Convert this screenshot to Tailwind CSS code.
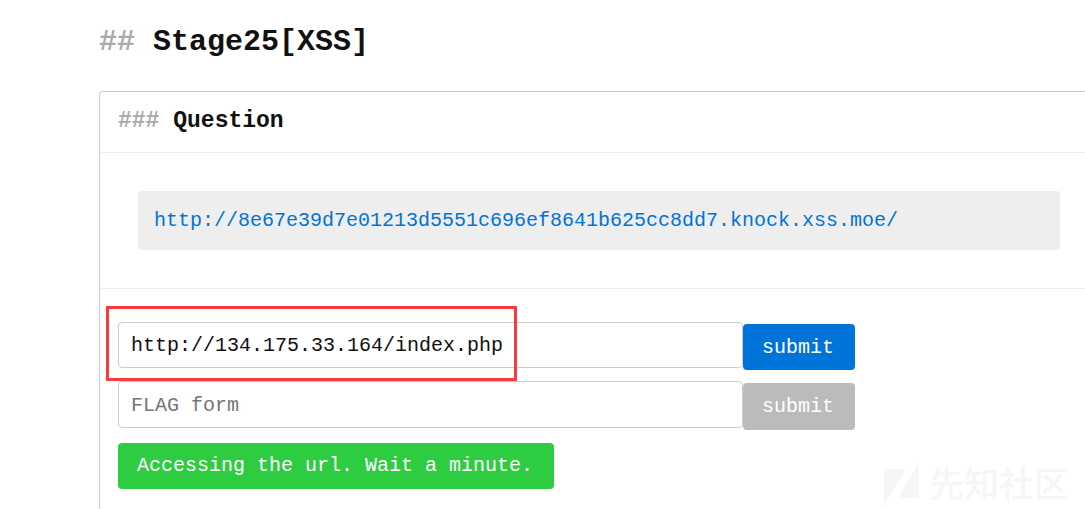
<!DOCTYPE html>
<html lang="en">
<head>
<meta charset="utf-8">
<title>Stage25[XSS]</title>
<script src="https://cdn.jsdelivr.net/npm/@tailwindcss/browser@4"></script>
</head>
<body class="bg-white font-['Liberation_Mono',monospace] text-[20px] leading-[30px] text-[#111]">
<main class="relative flex min-h-screen flex-col overflow-hidden pl-[99px]">
  <h1 class="pt-[22px] pb-[29px] text-[30px] leading-[40px] font-bold whitespace-pre"><span class="text-[#aaa]">## </span>Stage25[XSS]</h1>
  <section class="flex-1 rounded-tl border-t border-l border-[#ccc]">
    <header class="border-b border-[#eee] px-[18px] pt-[14px] pb-4">
      <h2 class="text-[23px] leading-[30px] font-bold whitespace-pre"><span class="text-[#aaa]">### </span>Question</h2>
    </header>
    <div class="border-b border-[#eee] py-[38px] pr-[25px] pl-[38px]">
      <p class="rounded bg-[#eee] px-4 pt-[15px] pb-[14px]"><a href="http://8e67e39d7e01213d5551c696ef8641b625cc8dd7.knock.xss.moe/" class="text-[#0074d9]">http://8e67e39d7e01213d5551c696ef8641b625cc8dd7.knock.xss.moe/</a></p>
    </div>
    <div class="flex flex-col items-start px-[18px] pt-[33px] pb-5">
      <form class="relative flex w-full max-w-[737px] items-start pb-[11px]">
        <input type="text" aria-label="URL" value="http://134.175.33.164/index.php" class="h-[46px] min-w-0 flex-1 rounded border border-[#ccc] bg-white px-3 outline-none">
        <button type="button" class="mt-[2px] h-[46px] w-28 rounded bg-[#0074d9] pt-[2px] pr-[2px] text-white">submit</button>
        <div class="pointer-events-none absolute -top-4 -left-3 h-[75px] w-[411px] border-3 border-[#fc393b]"></div>
      </form>
      <form class="flex w-full max-w-[737px] items-start pb-[13px]">
        <input type="text" aria-label="FLAG form" placeholder="FLAG form" class="h-[47px] min-w-0 flex-1 rounded border border-[#ccc] bg-white px-3 pt-[2px] outline-none placeholder:text-[#757575]">
        <button type="button" class="mt-[2px] h-[47px] w-28 rounded bg-[#bbb] pr-[2px] text-white">submit</button>
      </form>
      <p role="status" class="rounded bg-[#2ecc40] pt-2 pr-[21px] pb-2 pl-[19px] text-white">Accessing the url. Wait a minute.</p>
    </div>
  </section>
  <div class="pointer-events-none absolute right-4 bottom-[3px] flex items-end gap-[9px] text-[#f6f6f6]">
    <svg class="h-[44px] w-[36px]" viewBox="0 0 36 44" fill="currentColor" aria-hidden="true"><path d="M0 7H22L0 43ZM35 0V36H14Z"/></svg>
    <span class="font-['Noto_Sans_CJK_SC',sans-serif] text-[35px] leading-[48px] font-medium">先知社区</span>
  </div>
</main>
</body>
</html>
